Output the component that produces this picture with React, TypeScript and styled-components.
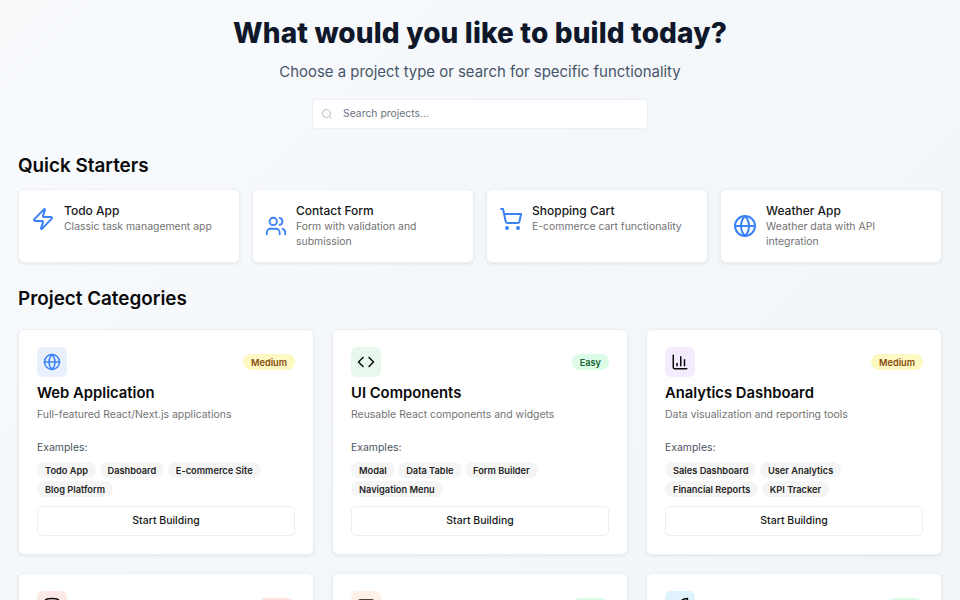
import React from "react";
import styled, { createGlobalStyle } from "styled-components";
import { Zap, Users, ShoppingCart, Globe, Search, Code, ChartColumn, Database, Mail, Rocket } from "lucide-react";

const Global = createGlobalStyle`
  html, body { margin: 0; padding: 0; height: 600px; overflow: hidden; }
  body { font-family: Inter, "Noto Sans", sans-serif; }
  * { box-sizing: border-box; }
`;
const Page = styled.div`
  height: 600px; overflow: hidden; padding: 16px 18px 0;
  background: linear-gradient(135deg, #f8fafc 0%, #f1f5f9 100%);
`;
const Hero = styled.header`display: flex; flex-direction: column; align-items: center; margin-bottom: 25px;`;
const Title = styled.h1`margin: 0 0 10px; font-size: 28px; line-height: 34px; font-weight: 800; color: #0f172a; letter-spacing: 0.15px;`;
const Sub = styled.p`margin: 0 0 15px; font-size: 14.93px; line-height: 24px; color: #475569;`;
const SearchBox = styled.div`
  width: 336px; height: 30px; display: flex; align-items: center; gap: 10px; padding: 0 0 1px 8px;
  background: #fff; border: 1px solid #eceff3; border-radius: 4px;
  font-size: 10.4px; color: #6b7280;
  svg { color: #9ca3af; }
`;
const SectionTitle = styled.h2<{ $gap: number }>`
  margin: 0 0 ${p => p.$gap}px; font-size: 18.85px; line-height: 24px; font-weight: 600; color: #0a0a0a;
`;
const QuickGrid = styled.div`display: grid; grid-template-columns: repeat(4, 1fr); gap: 12px; margin-bottom: 24px;`;
const QuickCard = styled.div`
  height: 74px; padding: 13px 12px; display: flex; align-items: flex-start;
  background: #fff; border: 1px solid #eceef1; border-radius: 6px;
  box-shadow: 0 1px 3px rgba(0,0,0,.08);
`;
const QuickRow = styled.div`
  display: flex; align-items: center; gap: 9px;
  svg { color: #3b82f6; flex: none; }
`;
const QuickName = styled.div`font-size: 12px; line-height: 15px; margin-bottom: 1px; font-weight: 500; color: #171717;`;
const QuickDesc = styled.div`font-size: 10.45px; line-height: 15px; color: #737373;`;
const CatGrid = styled.div`display: grid; grid-template-columns: repeat(3, 1fr); gap: 18px;`;
const CatCard = styled.div`
  height: 226px; padding: 17px 18px 18px; display: flex; flex-direction: column;
  background: #fff; border: 1px solid #eceef1; border-radius: 6px;
  box-shadow: 0 1px 3px rgba(0,0,0,.08);
`;
const CatHead = styled.div`display: flex; justify-content: space-between; align-items: center; margin-bottom: 6px;`;
const IconTile = styled.div<{ $bg: string; $fg: string }>`
  width: 30px; height: 30px; border-radius: 6px; display: flex; align-items: center; justify-content: center;
  background: ${p => p.$bg}; color: ${p => p.$fg};
`;
const Badge = styled.span<{ $bg: string; $fg: string }>`
  height: 16px; padding: 0 8px; border-radius: 8px; display: flex; align-items: center;
  font-size: 9.2px; font-weight: 600; background: ${p => p.$bg}; color: ${p => p.$fg};
`;
const CatName = styled.h3`margin: 0 0 4px; font-size: 14.8px; line-height: 20px; font-weight: 600; color: #0a0a0a;`;
const CatDesc = styled.p`margin: 0 0 18px; font-size: 10.45px; line-height: 15px; color: #737373;`;
const ExLabel = styled.div`font-size: 10.45px; line-height: 15px; color: #4b5563; margin-bottom: 7px;`;
const Tags = styled.div`display: flex; flex-wrap: wrap; gap: 3px 3.5px;`;
const Tag = styled.span`
  height: 16px; padding: 0 8px; border-radius: 8px; display: flex; align-items: center;
  font-size: 9.25px; font-weight: 600; background: #f5f5f5; color: #262626;
`;
const Start = styled.button`
  margin-top: auto; height: 30px; width: 100%; padding: 0 0 2px; background: #fff; border: 1px solid #eceef1; border-radius: 5px;
  font: 500 10.5px Inter, sans-serif; color: #171717;
`;

const quick = [
  { icon: Zap, size: 24, name: "Todo App", desc: "Classic task management app" },
  { icon: Users, size: 22, name: "Contact Form", desc: "Form with validation and submission" },
  { icon: ShoppingCart, size: 24, name: "Shopping Cart", desc: "E-commerce cart functionality" },
  { icon: Globe, size: 24, name: "Weather App", desc: "Weather data with API integration" },
];
const levels = {
  Easy: ["#dcfce7", "#166534"],
  Medium: ["#fef9c3", "#854d0e"],
  Hard: ["#fee2e2", "#991b1b"],
} as const;
const cats = [
  { icon: Globe, bg: "#e8f0fe", fg: "#3b82f6", level: "Medium", name: "Web Application", desc: "Full-featured React/Next.js applications", tags: ["Todo App", "Dashboard", "E-commerce Site", "Blog Platform"] },
  { icon: Code, bg: "#e8f8ee", fg: "#0a0a0a", level: "Easy", name: "UI Components", desc: "Reusable React components and widgets", tags: ["Modal", "Data Table", "Form Builder", "Navigation Menu"] },
  { icon: ChartColumn, bg: "#f5ebff", fg: "#0a0a0a", level: "Medium", name: "Analytics Dashboard", desc: "Data visualization and reporting tools", tags: ["Sales Dashboard", "User Analytics", "Financial Reports", "KPI Tracker"] },
  { icon: Database, bg: "#fde8e8", fg: "#0a0a0a", level: "Hard", name: "Backend API", desc: "", tags: [] },
  { icon: Mail, bg: "#fff1e6", fg: "#0a0a0a", level: "Easy", name: "Email Templates", desc: "", tags: [] },
  { icon: Rocket, bg: "#e0f2fe", fg: "#0a0a0a", level: "Easy", name: "Landing Page", desc: "", tags: [] },
] as const;

export default function App() {
  return (
    <Page>
      <Global />
      <Hero>
        <Title>What would you like to build today?</Title>
        <Sub>Choose a project type or search for specific functionality</Sub>
        <SearchBox><Search size={12} strokeWidth={1.5} />Search projects...</SearchBox>
      </Hero>
      <SectionTitle $gap={11}>Quick Starters</SectionTitle>
      <QuickGrid>
        {quick.map(q => (
          <QuickCard key={q.name}>
            <QuickRow>
              <q.icon size={q.size} />
              <div><QuickName>{q.name}</QuickName><QuickDesc>{q.desc}</QuickDesc></div>
            </QuickRow>
          </QuickCard>
        ))}
      </QuickGrid>
      <SectionTitle $gap={18}>Project Categories</SectionTitle>
      <CatGrid>
        {cats.map(c => (
          <CatCard key={c.name}>
            <CatHead>
              <IconTile $bg={c.bg} $fg={c.fg}><c.icon size={18} /></IconTile>
              <Badge $bg={levels[c.level][0]} $fg={levels[c.level][1]}>{c.level}</Badge>
            </CatHead>
            <CatName>{c.name}</CatName>
            <CatDesc>{c.desc}</CatDesc>
            <ExLabel>Examples:</ExLabel>
            <Tags>{c.tags.map(t => <Tag key={t}>{t}</Tag>)}</Tags>
            <Start>Start Building</Start>
          </CatCard>
        ))}
      </CatGrid>
    </Page>
  );
}
